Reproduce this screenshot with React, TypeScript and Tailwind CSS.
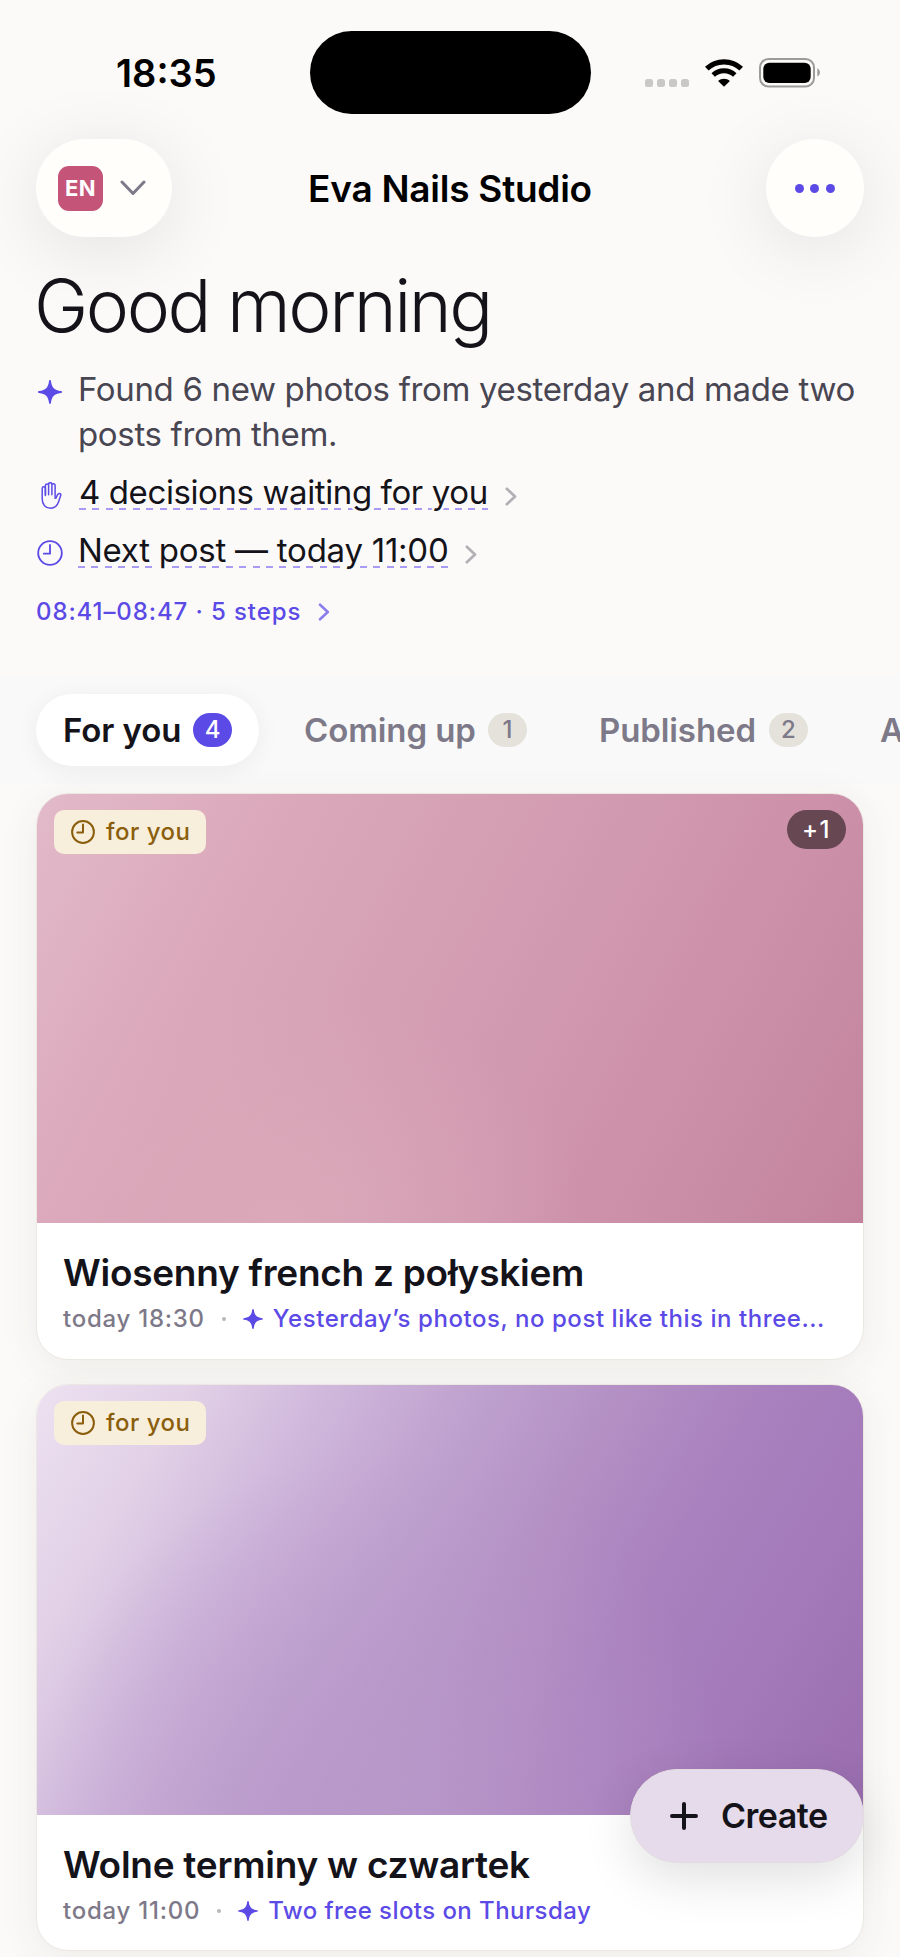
import React from 'react';

interface Tab {
  label: string;
  count: number;
  active?: boolean;
  className: string;
}

interface Post {
  title: string;
  time: string;
  reason: string;
  extra?: string;
  cover: string;
  reasonClass: string;
}

const tabs: Tab[] = [
  { label: 'For you', count: 4, active: true, className: 'w-[117px]' },
  { label: 'Coming up', count: 1, className: 'w-[173px] pl-[2px]' },
  { label: 'Published', count: 2, className: 'w-[159px] pl-[2px]' },
];

const posts: Post[] = [
  {
    title: 'Wiosenny french z połyskiem',
    time: 'today 18:30',
    reason: 'Yesterday’s photos, no post like this in three...',
    extra: '+1',
    cover:
      'h-[429px] bg-[radial-gradient(ellipse_36%_55%_at_30%_100%,#dcaabbdd,#dcaabb00),linear-gradient(118deg,#e2bac9_0%,#dba9bb_22%,#d5a0b4_42%,#d097ae_62%,#cc90a8_76%,#c78aa3_88%,#c3829c_100%)]',
    reasonClass: 'tracking-[0.55px]',
  },
  {
    title: 'Wolne terminy w czwartek',
    time: 'today 11:00',
    reason: 'Two free slots on Thursday',
    cover:
      'h-[430px] bg-[radial-gradient(ellipse_42%_85%_at_42%_100%,#b999cadd,#b999ca00),linear-gradient(120deg,#ede1f1_0%,#e2d1e7_14%,#d0b8dc_27%,#bfa2cf_41%,#b491c5_54%,#a981be_68%,#a47aba_82%,#996dae_100%)]',
    reasonClass: 'tracking-[0.43px]',
  },
];

const Sparkle: React.FC<{ className?: string }> = ({ className }) => (
  <svg viewBox="0 0 24 24" className={className} fill="currentColor" aria-hidden="true">
    <path d="M12 0c.6 0 .9.5 1 1.200C13.800 7.600 16.400 10.200 22.800 11c.7.1 1.200.4 1.200 1s-.5.9-1.200 1c-6.400.8-9 3.400-9.800 9.800-.1.700-.4 1.200-1 1.200s-.9-.5-1-1.200c-.8-6.400-3.400-9-9.800-9.800C.5 12.900 0 12.600 0 12s.5-.9 1.200-1C7.600 10.200 10.200 7.600 11 1.200 11.100.5 11.400 0 12 0z" />
  </svg>
);

const Clock: React.FC<{ className?: string; strokeWidth: number }> = ({ className, strokeWidth }) => (
  <svg
    viewBox="0 0 24 24"
    className={className}
    fill="none"
    stroke="currentColor"
    strokeWidth={strokeWidth}
    strokeLinecap="round"
    strokeLinejoin="round"
    aria-hidden="true"
  >
    <circle cx="12" cy="12" r="10.900" />
    <path d="M12 4.500V12.600H6.300" />
  </svg>
);

const Hand: React.FC<{ className?: string }> = ({ className }) => (
  <svg
    viewBox="0 0 20 27"
    className={className}
    fill="none"
    stroke="currentColor"
    strokeWidth="1.500"
    strokeLinecap="round"
    strokeLinejoin="round"
    aria-hidden="true"
  >
    <path d="M3.900 13.500V6.400a1.600 1.600 0 0 0-3.200 0V17c0 5.500 3.300 9.200 8.400 9.200 4.300 0 6.600-2.200 7.900-6.100l2.200-6.500c.3-1-.1-1.800-.9-2.100-.9-.3-1.700.1-2.200 1.100l-1.700 3.600" />
    <path d="M3.900 12.800V3.500a1.600 1.600 0 0 1 3.200 0v9.300M7.100 12.800V2.300a1.600 1.600 0 0 1 3.300 0v10.500M10.400 12.800V3.300a1.600 1.600 0 0 1 3.200 0v12.900" />
  </svg>
);

const Chevron: React.FC<{ className?: string }> = ({ className }) => (
  <svg
    viewBox="0 0 12 19"
    className={className}
    fill="none"
    stroke="currentColor"
    strokeWidth="2.700"
    strokeLinecap="round"
    strokeLinejoin="round"
    aria-hidden="true"
  >
    <path d="M1.800 1.800L10 9.500L1.800 17.200" />
  </svg>
);

const StatusBar: React.FC = () => (
  <div className="flex h-[139px] items-start">
    <div className="w-[310px] pt-[50px] pl-[116px] text-[38px] leading-[46px] font-semibold text-black">18:35</div>
    <div className="mt-[31px] h-[83px] w-[281px] rounded-full bg-black" />
    <div className="flex pt-[58px] pl-[54px]">
      <div className="flex gap-1 pt-[21px]">
        {[0, 1, 2, 3].map(dot => (
          <span key={dot} className="h-2 w-2 rounded-[2.5px] bg-[#c9c8c6]" />
        ))}
      </div>
      <svg viewBox="0 0 38 28" className="ml-[16px] mt-px h-[28px] w-[38px]" fill="none" stroke="black" aria-hidden="true">
        <path d="M1.800 9.600C11.200 .5 26.800 .5 36.200 9.600" strokeWidth="5.200" />
        <path d="M8.200 16C14.200 10.300 23.800 10.300 29.800 16" strokeWidth="5" />
        <path d="M19 27.800L13.100 21.900C16.400 19 21.600 19 24.900 21.900Z" fill="black" stroke="none" />
      </svg>
      <svg viewBox="0 0 62 30" className="ml-[16px] h-[30px] w-[62px]" aria-hidden="true">
        <rect x="1" y="1" width="54" height="27.500" rx="8.500" fill="none" stroke="#9b9b99" strokeWidth="2" />
        <rect x="4.300" y="4.700" width="47.400" height="20.300" rx="6" fill="black" />
        <path d="M58.300 10.300c3.500 1.700 3.500 6.600 0 8.300z" fill="#9b9b99" />
      </svg>
    </div>
  </div>
);

const Header: React.FC = () => (
  <header className="flex h-[98px] items-center justify-between px-9">
    <button className="flex h-[98px] w-[136px] items-center rounded-full bg-[#fffefb] pl-[22px] shadow-[0_12px_76px_rgba(0,0,0,0.1)]">
      <span className="flex h-[45px] w-[45px] items-center justify-center rounded-[11px] bg-[#c45578] text-[22px] font-bold tracking-[0.4px] text-white">
        EN
      </span>
      <svg
        viewBox="0 0 26 16"
        className="ml-[17px] -mt-px h-[16px] w-[26px] text-[#7d7989]"
        fill="none"
        stroke="currentColor"
        strokeWidth="3"
        strokeLinecap="round"
        strokeLinejoin="round"
        aria-hidden="true"
      >
        <path d="M2 2L13 13.500L24 2" />
      </svg>
    </button>
    <h1 className="pt-px pr-[38px] text-[37px] font-semibold tracking-[-0.25px] whitespace-nowrap text-black">Eva Nails Studio</h1>
    <button
      aria-label="More"
      className="flex h-[98px] w-[98px] items-center justify-center gap-[6.500px] rounded-full bg-[#fffefb] shadow-[0_12px_76px_rgba(0,0,0,0.1)]"
    >
      <span className="h-[9px] w-[9px] rounded-full bg-[#5b4ae6]" />
      <span className="h-[9px] w-[9px] rounded-full bg-[#5b4ae6]" />
      <span className="h-[9px] w-[9px] rounded-full bg-[#5b4ae6]" />
    </button>
  </header>
);

// The wide background-coloured stroke keeps the dashes clear of the descenders
const DashedLink: React.FC<{ children: React.ReactNode; className: string }> = ({ children, className }) => (
  <span
    className={`h-[45px] bg-[repeating-linear-gradient(90deg,#a79bf3_0px,#a79bf3_7px,transparent_7px,transparent_13.430px)] bg-[length:100%_2px] bg-[position:0_38px] bg-no-repeat text-[33px] leading-[45px] whitespace-nowrap text-[#14131a] [-webkit-text-stroke:5px_#fcfaf8] [paint-order:stroke_fill] ${className}`}
  >
    {children}
  </span>
);

const Greeting: React.FC = () => (
  <section className="px-9">
    <h2 className="mt-[24px] -ml-[2px] text-[73px] leading-[90px] font-light tracking-[-2.450px] whitespace-nowrap text-[#14131a]">
      Good morning
    </h2>
    <div className="mt-[16px] flex">
      <Sparkle className="mt-[13px] ml-[2px] h-6 w-6 shrink-0 text-[#5b4ae6]" />
      <p className="ml-4 text-[33px] leading-[44.500px] tracking-[-0.34px] whitespace-nowrap text-[#494653]">
        Found 6 new photos from yesterday and made two
        <br />
        posts from them.
      </p>
    </div>
    <a className="mt-[14px] flex h-[45px]">
      <Hand className="mt-[12px] ml-[5px] h-[27px] w-[21px] shrink-0 text-[#5b4ae6]" />
      <DashedLink className="ml-[17px] tracking-[-0.4px]">4 decisions waiting for you</DashedLink>
      <Chevron className="mt-[17px] ml-[17px] h-[19px] w-3 text-[#b3b0b5]" />
    </a>
    <a className="mt-[13px] flex h-[45px]">
      <Clock strokeWidth={1.7} className="mt-[12px] ml-[1px] h-[26px] w-[26px] shrink-0 text-[#5b4ae6]" />
      <DashedLink className="ml-[15px] tracking-[-0.25px]">Next post — today 11:00</DashedLink>
      <Chevron className="mt-[17px] ml-[17px] h-[19px] w-3 text-[#b3b0b5]" />
    </a>
    <a className="mt-[23px] flex h-[32px] text-[#5b4ae6]">
      <span className="text-[24px] leading-[32px] font-medium tracking-[0.9px] whitespace-nowrap">08:41–08:47 · 5 steps</span>
      <Chevron className="mt-[7px] ml-[17px] h-[18px] w-3 opacity-70" />
    </a>
  </section>
);

const TabBar: React.FC = () => (
  <nav className="mt-[48px] flex h-[108px] items-center gap-4 overflow-hidden bg-[#f8f9f8] pl-9">
    {tabs.map(tab => (
      <button
        key={tab.label}
        className={`flex h-[72px] shrink-0 items-center gap-[13px] rounded-full px-[27px] text-[33px] font-semibold whitespace-nowrap ${
          tab.active ? 'bg-white text-[#14131a] shadow-[0_4px_24px_rgba(0,0,0,0.06)]' : 'text-[#7d7989]'
        }`}
      >
        <span className={`${tab.className} pt-px text-left tracking-[-0.1px]`}>{tab.label}</span>
        <span
          className={`flex h-[34px] w-[39px] items-center justify-center rounded-full text-[24px] font-medium ${
            tab.active ? 'bg-[#5b4ae6] text-white' : 'bg-[#e5e2db] text-[#7d7989]'
          }`}
        >
          {tab.count}
        </span>
      </button>
    ))}
    <button className="shrink-0 pt-px pl-[29px] text-[33px] font-semibold text-[#7d7989]">All</button>
  </nav>
);

const PostCard: React.FC<{ post: Post }> = ({ post }) => (
  <article className="h-[567px] overflow-hidden rounded-[32px] border border-[#ebe8e4] bg-white shadow-[0_8px_40px_rgba(60,50,40,0.07)]">
    <div className={`-mx-px flex items-start justify-between px-[18px] pt-4 ${post.cover}`}>
      <span className="flex h-[44px] w-[152px] items-center rounded-[10px] bg-[#f7eedc] pl-[17px] text-[24px] font-medium text-[#8b5e0c]">
        <Clock strokeWidth={2} className="h-6 w-6" />
        <span className="ml-[11px] tracking-[0.500px] whitespace-nowrap">for you</span>
      </span>
      {post.extra && (
        <span className="flex h-[39px] w-[59px] items-center justify-center rounded-full bg-[#664752] text-[24px] font-medium tracking-[1.5px] text-white">
          {post.extra}
        </span>
      )}
    </div>
    <div className="px-[26px] pt-[27px]">
      <h3 className="text-[37px] leading-[46px] font-semibold tracking-[-0.26px] whitespace-nowrap text-[#14131a]">{post.title}</h3>
      <div className="mt-[7px] flex h-[32px] items-center text-[24px] leading-[32px] font-medium whitespace-nowrap">
        <span className="tracking-[0.75px] text-[#7d7989]">{post.time}</span>
        <span className="mx-[17px] h-1 w-1 rounded-full bg-[#b9b6bb]" />
        <Sparkle className="h-5 w-5 text-[#5b4ae6]" />
        <span className={`ml-[10px] text-[#5b4ae6] ${post.reasonClass}`}>{post.reason}</span>
      </div>
    </div>
  </article>
);

const App: React.FC = () => {
  return (
    <div className="relative h-[1957px] w-[900px] overflow-hidden bg-[#fcfaf8] font-['Inter','Liberation_Sans',sans-serif]">
      <StatusBar />
      <Header />
      <Greeting />
      <TabBar />
      <main className="mt-[9px] flex flex-col gap-6 px-9">
        {posts.map(post => (
          <PostCard key={post.title} post={post} />
        ))}
      </main>

      {/* Floating action */}
      <button className="absolute right-9 bottom-[94px] flex h-[94px] w-[234px] items-center rounded-full border border-[#e3dbe2] bg-[#e6dbeb] pl-[39px] text-[34px] font-semibold text-[#14131a] shadow-[0_16px_50px_rgba(0,0,0,0.12)]">
        <svg viewBox="0 0 28 28" className="h-7 w-7" fill="none" stroke="currentColor" strokeWidth="4" strokeLinecap="round" aria-hidden="true">
          <path d="M14 2V26M2 14H26" />
        </svg>
        <span className="ml-[23px] pb-[2px] tracking-[-0.5px]">Create</span>
      </button>
    </div>
  );
};

export default App;
